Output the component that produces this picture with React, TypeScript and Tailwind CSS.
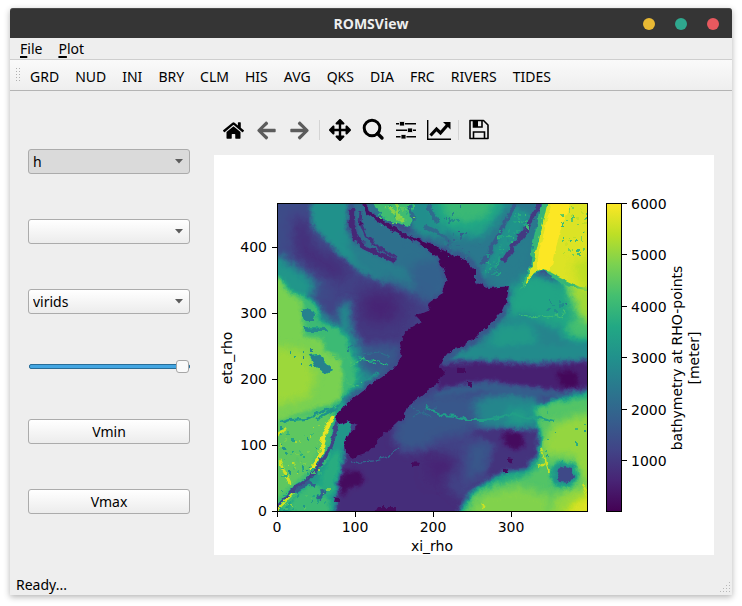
import { useState } from "react";
import type { ReactNode } from "react";
import { FaArrowLeft, FaArrowRight, FaArrowsAlt, FaHome } from "react-icons/fa";

const datasets = ["GRD", "NUD", "INI", "BRY", "CLM", "HIS", "AVG", "QKS", "DIA", "FRC", "RIVERS", "TIDES"];

/* One depth contour: v is a percentage of the 0-6000 m colour range. */
type Shape = { v: number; blur: 0 | 1 | 2 | 4 | 7; d: string; w?: number };

const shapes: Shape[] = [
  // north-west basin
  { v: 23, blur: 4, d: "M265 190H330V300H265Z" },
  { v: 13, blur: 7, d: "M292 215L308 218L314 245L342 262L350 275L335 282L312 268L295 258Z" },
  { v: 50, blur: 2, d: "M310 195L312 225L328 243L347 261L365 275L388 284L385 262L360 250L347 230L349 195Z" },
  { v: 42, blur: 4, d: "M345 235L370 250L397 258L430 262L436 285L428 300L405 293L382 280L358 268Z" },
  { v: 37, blur: 2, d: "M350 195L372 195L392 225L420 240L438 258L442 290L428 296L408 270L378 256L358 240Z" },
  { v: 31, blur: 4, d: "M410 265L438 258L447 278L443 292L430 302L415 296Z" },
  { v: 17, blur: 7, d: "M358 282L400 288L425 302L415 320L402 360L350 352L345 320Z" },
  { v: 10, blur: 7, d: "M368 292L396 295L400 318L372 324L360 310Z" },
  // western shelf
  { v: 52, blur: 4, d: "M265 258L280 256L300 270L318 285L308 298L340 330L339 308L350 300L351 330L362 350L390 362L372 390L340 415L345 450L333 525H265Z" },
  { v: 68, blur: 2, d: "M265 268L281 277L292 292L307 297L318 305L320 322L336 326L346 336L351 352L360 365L355 385L338 405L320 525H265Z" },
  { v: 80, blur: 2, d: "M265 275L280 279L288 292L302 301L303 320L305 337L322 338L325 352L340 358L343 375L342 398L330 405L300 414L265 428Z" },
  { v: 85, blur: 4, d: "M265 345L305 350L316 378L308 398L265 408Z" },
  { v: 75, blur: 2, d: "M265 425L300 415L332 410L325 440L308 472L265 510Z" },
  { v: 44, blur: 1, d: "M302 311L307 309L315 314L314 321L306 321L302 317Z" },
  { v: 47, blur: 1, d: "M303 327L325 328L328 332L307 332Z" },
  { v: 44, blur: 1, d: "M309 355L320 354L324 362L332 370L326 373L315 367Z" },
  { v: 28, blur: 4, d: "M364 345L402 345L395 367L374 378L358 365Z" },
  // western slope
  { v: 53, blur: 1, d: "M337 424L352 420L347 445L343 464L340 486L334 525L270 525L307 483L330 458Z" },
  { v: 68, blur: 2, d: "M283 525L293 497L313 482L328 490L333 525Z" },
  { v: 62, blur: 2, d: "M318 480L333 450L343 454L337 492L325 498Z" },
  { v: 20, blur: 1, w: 4, d: "M274 510L293 490L310 478L321 463L331 447L337 423L345 410" },
  { v: 30, blur: 1, w: 4, d: "M295 492L309 482L315 486M318 500L325 490" },
  { v: 97, blur: 0, w: 4, d: "M333 415L325 433L321 453L312 470" },
  { v: 93, blur: 1, w: 3, d: "M276 513L286 500L292 494M277 435L287 428M279 460L290 484" },
  { v: 50, blur: 1, w: 2, d: "M280 423L290 420L305 419L321 412L334 408M316 419L333 410L345 400" },
  { v: 57, blur: 1, w: 4, d: "M336 412L345 399L362 386L378 374" },
  // southern basin
  { v: 13, blur: 2, d: "M345 450L358 425L405 420L430 390L460 420L475 435L480 478L455 525H333L340 485Z" },
  { v: 27, blur: 4, d: "M400 416L412 402L432 392L470 393L540 395L540 427L475 431L465 446L402 452L392 435Z" },
  { v: 20, blur: 4, d: "M432 440L475 430L478 485L465 502L446 488Z" },
  { v: 27, blur: 4, d: "M467 447L492 437L486 472L467 481Z" },
  { v: 9, blur: 7, d: "M432 453L457 456L453 475L430 480Z" },
  { v: 46, blur: 4, d: "M473 403L490 395L518 392L538 398L548 432L508 429L480 427Z" },
  { v: 55, blur: 4, d: "M505 410L528 407L533 425L510 424Z" },
  { v: 15, blur: 2, d: "M468 431L500 429L541 431L538 450L525 467L506 474L486 478L496 445Z" },
  { v: 3, blur: 2, d: "M502 433L519 431L524 438L524 446L516 451L504 444Z" },
  // north-east plateau
  { v: 40, blur: 4, d: "M410 190H552L535 280L506 296L476 280L445 252L410 238Z" },
  { v: 49, blur: 2, d: "M402 195H448L450 228L440 238L415 232Z" },
  { v: 58, blur: 4, d: "M430 195H512L498 220L480 238L455 235L436 222Z" },
  { v: 67, blur: 4, d: "M438 190H500L488 217L465 224L446 218Z" },
  { v: 69, blur: 1, d: "M370 195L376 208L387 221L397 224L408 227L413 218L417 195Z" },
  { v: 82, blur: 1, w: 4, d: "M398 204L397 216L404 223M389 206L393 213" },
  { v: 35, blur: 1, w: 4, d: "M425 226L440 234L452 244M410 205L414 221M428 205L437 222" },
  { v: 42, blur: 4, d: "M486 275L508 255L529 232L533 245L522 288L504 295Z" },
  { v: 51, blur: 2, d: "M514 208L530 212L521 232L504 256L485 278L482 273Z" },
  { v: 29, blur: 1, w: 4, d: "M517 201L506 220L497 238L482 265" },
  { v: 17, blur: 1, w: 5, d: "M544 198L534 214L527 229L514 245L503 262" },
  // east
  { v: 45, blur: 4, d: "M505 292L525 270L600 320V366H440L475 338L498 316Z" },
  { v: 59, blur: 4, d: "M510 292L528 274L560 280L572 300L575 335L548 325L525 314L508 318Z" },
  { v: 54, blur: 4, d: "M498 325L530 322L540 345L485 352Z" },
  { v: 70, blur: 4, d: "M560 275L600 270V338L580 342L563 335L572 316Z" },
  { v: 86, blur: 4, d: "M560 272L612 262V324L584 322L574 302Z" },
  { v: 66, blur: 1, d: "M543 195H600V292L574 288L556 280L542 270L529 277L519 292L530 266L534 236Z" },
  { v: 95, blur: 1, d: "M549 195H600V283L580 287L559 277L543 268L534 273L524 287L536 253L543 222Z" },
  { v: 100, blur: 1, d: "M554 195H574L562 225L554 255L551 270L537 269L539 252L546 223Z" },
  { v: 90, blur: 4, d: "M572 262L600 252V292L580 290Z" },
  // eastern channel
  { v: 48, blur: 2, d: "M454 350L475 347L600 344V362L447 363Z" },
  { v: 30, blur: 2, d: "M438 361L480 360L530 363L600 358V392L555 397L515 395L480 391L436 397Z" },
  { v: 9, blur: 2, d: "M438 364L480 361L530 365L600 361V386L562 391L530 387L485 381L463 385L436 390Z" },
  { v: 2, blur: 2, d: "M557 372L574 371L580 384L568 389L560 382Z" },
  // south-east shelf
  { v: 62, blur: 2, d: "M530 408L555 399L600 388V525H450L470 493L490 480L506 472L525 470L540 455L544 440L540 428Z" },
  { v: 73, blur: 2, d: "M536 408L558 402L600 397V525H460L474 494L494 485L525 478L539 466L541 435Z" },
  { v: 84, blur: 4, d: "M553 423L600 410V525H545L554 495L585 485L572 456L546 457L541 445Z" },
  { v: 81, blur: 4, d: "M480 495L515 486L550 495V525H464Z" },
  { v: 95, blur: 4, d: "M583 497L600 488V525H560L569 507Z" },
  { v: 50, blur: 2, d: "M552 467L560 462L575 465L578 477L570 487L554 485L551 478Z" },
  { v: 22, blur: 1, d: "M558 469L564 466L572 468L574 476L569 483L560 482L557 476Z" },
  { v: 92, blur: 0, w: 2, d: "M541 448L545 459L549 472M582 484L588 495M537 467L545 464M480 503L485 507" },
  // abyssal trench
  { v: 25, blur: 2, w: 5, d: "M413 238L440 249L466 258L477 271L480 282M508 290L503 315L475 340L455 352L444 362M345 402L372 382L400 363" },
  { v: 1, blur: 1, d: "M407 235L425 241L445 251L466 260L475 270L475 282L488 288L509 286L507 298L501 312L488 326L475 338L462 347L453 348L444 359L439 368L444 371L438 383L424 393L409 405L404 417L380 438L367 453L353 458L345 453L344 444L350 432L358 425L348 421L340 424L335 417L347 403L367 387L382 377L394 367L402 356L400 343L408 330L421 322L415 316L427 311L430 302L443 293L447 278L438 258L425 247Z" },
  { v: 3, blur: 2, d: "M343 471L359 471L365 479L359 486L350 488L342 496L337 486Z" },
  { v: 3, blur: 1, d: "M335 497L340 498L340 502L334 502ZM412 462L420 463L418 467L412 466ZM457 368L465 367L465 373L458 373ZM468 383L473 383L472 387L468 386ZM503 470L508 469L507 473L503 473ZM508 457L514 458L512 463L508 461ZM378 507H396V514H374Z" },
  // banks and ridges beside the trench
  { v: 11, blur: 1, w: 5, d: "M352 209L351 223L355 236L364 247L379 254L395 261" },
  { v: 15, blur: 1, w: 3, d: "M361 211L360 222L366 236L378 248L396 257" },
  { v: 5, blur: 1, w: 4, d: "M365 203L368 212L376 218L388 226L402 234L413 240M359 222L361 225" },
  // fine channels
  { v: 56, blur: 1, w: 2, d: "M426 407L442 415L456 416L468 420L485 420L498 418L512 413L522 418L535 417L555 422" },
  { v: 70, blur: 1, w: 1, d: "M520 315L528 317L540 316L548 318L556 314L563 318L565 308M332 356L341 360L347 358L352 366L364 357L375 364M344 370L348 384L358 386L363 381M358 358L378 361L389 366" },
  { v: 38, blur: 1, w: 1, d: "M410 406L421 412L432 417M414 417L427 409L437 408M350 463L372 461L390 456L399 449M347 350L357 344L363 354L378 352L390 357" },
];

/* Scattered seamounts and pits, generated from a fixed seed per field. */
type Field = { x: number; y: number; w: number; h: number; n: number; v: number; spread: number };
const fields: Field[] = [
  { x: 279, y: 425, w: 40, h: 50, n: 75, v: 70, spread: 40 },
  { x: 279, y: 488, w: 48, h: 22, n: 30, v: 70, spread: 35 },
  { x: 560, y: 205, w: 26, h: 50, n: 42, v: 80, spread: 32 },
  { x: 546, y: 296, w: 20, h: 17, n: 12, v: 47, spread: 14 },
  { x: 513, y: 212, w: 14, h: 20, n: 30, v: 58, spread: 20 },
  { x: 498, y: 230, w: 14, h: 22, n: 28, v: 54, spread: 20 },
  { x: 485, y: 252, w: 14, h: 24, n: 28, v: 55, spread: 18 },
  { x: 436, y: 205, w: 38, h: 15, n: 9, v: 45, spread: 16 },
  { x: 440, y: 230, w: 40, h: 28, n: 24, v: 35, spread: 18 },
  { x: 284, y: 345, w: 28, h: 20, n: 9, v: 52, spread: 20 },
  { x: 378, y: 205, w: 36, h: 20, n: 26, v: 66, spread: 28 },
  { x: 545, y: 400, w: 40, h: 80, n: 10, v: 60, spread: 20 },
];

function gray(value: number) {
  const level = Math.round((Math.max(0, Math.min(100, value)) / 100) * 255);
  return `rgb(${level},${level},${level})`;
}

function speckles() {
  let seed = 41;
  const next = () => {
    seed = (seed * 16807) % 2147483647;
    return seed / 2147483647;
  };
  return fields.flatMap((f) =>
    Array.from({ length: f.n }, () => ({
      x: Math.round(f.x + next() * f.w),
      y: Math.round(f.y + next() * f.h),
      w: 1 + Math.round(next() * 2),
      h: 1 + Math.round(next() * 2),
      v: f.v + (next() - 0.5) * f.spread,
    })),
  );
}

const viridis = ["#440154", "#482475", "#414487", "#355f8d", "#2a788e", "#21918c", "#22a884", "#44bf70", "#7ad151", "#bddf26", "#fde725"];
const channel = (at: number) => viridis.map((c) => (parseInt(c.slice(at, at + 2), 16) / 255).toFixed(3)).join(" ");

function Bathymetry() {
  const region = {
    filterUnits: "userSpaceOnUse" as const,
    x: 257,
    y: 183,
    width: 350,
    height: 348,
    colorInterpolationFilters: "sRGB" as const,
  };
  return (
    <svg x={277} y={203} width={310} height={308} viewBox="277 203 310 308">
      <defs>
        {[1, 2, 4, 7].map((b) => (
          <filter key={b} id={`soft${b}`} {...region}>
            <feGaussianBlur stdDeviation={b === 1 ? 0.7 : b} />
          </filter>
        ))}
        <filter id="depth" {...region}>
          <feTurbulence type="fractalNoise" baseFrequency="0.14" numOctaves="3" seed="8" result="noise" />
          <feDisplacementMap in="SourceGraphic" in2="noise" scale="6" xChannelSelector="R" yChannelSelector="G" />
          <feGaussianBlur stdDeviation="0.45" />
          <feComponentTransfer>
            <feFuncR type="table" tableValues={channel(1)} />
            <feFuncG type="table" tableValues={channel(3)} />
            <feFuncB type="table" tableValues={channel(5)} />
          </feComponentTransfer>
        </filter>
      </defs>
      <g filter="url(#depth)">
        <rect x={257} y={183} width={350} height={348} fill={gray(20)} />
        {shapes.map((s, i) => (
          <path
            key={i}
            d={s.d}
            fill={s.w ? "none" : gray(s.v)}
            stroke={s.w ? gray(s.v) : "none"}
            strokeWidth={s.w}
            strokeLinejoin="round"
            filter={s.blur ? `url(#soft${s.blur})` : undefined}
          />
        ))}
        {speckles().map((p, i) => (
          <rect key={i} x={p.x} y={p.y} width={p.w} height={p.h} fill={gray(p.v)} />
        ))}
      </g>
    </svg>
  );
}

function Figure() {
  return (
    <svg viewBox="214 155 500 400" className="block w-full bg-white font-['DejaVu_Sans',sans-serif] text-[14px]" role="img" aria-label="Bathymetry map">
      <defs>
        <linearGradient id="colorbar" x1="0" y1="1" x2="0" y2="0">
          {viridis.map((c, i) => (
            <stop key={c} offset={i / 10} stopColor={c} />
          ))}
        </linearGradient>
      </defs>
      <Bathymetry />
      <rect x={277.5} y={203.5} width={310} height={308} fill="none" stroke="#000" />
      {[0, 100, 200, 300, 400].map((t, i) => (
        <g key={t}>
          <path d={`M272 ${511.5 - i * 66}h5`} stroke="#000" />
          <text x={267} y={516 - i * 66} textAnchor="end">{t}</text>
        </g>
      ))}
      {[0, 100, 200, 300].map((t, i) => (
        <g key={t}>
          <path d={`M${277.5 + i * 78} 512v5`} stroke="#000" />
          <text x={277 + i * 78} y={532} textAnchor="middle">{t}</text>
        </g>
      ))}
      <text x={432} y={551} textAnchor="middle">xi_rho</text>
      <text transform="translate(232 358) rotate(-90)" textAnchor="middle">eta_rho</text>
      <rect x={606.5} y={203.5} width={15} height={308} fill="url(#colorbar)" stroke="#000" />
      {[6000, 5000, 4000, 3000, 2000, 1000].map((t, i) => (
        <g key={t}>
          <path d={`M622 ${Math.round(203 + i * 51.4) + 0.5}h5`} stroke="#000" />
          <text x={631} y={Math.round(209 + i * 51.4)}>{t}</text>
        </g>
      ))}
      <text transform="translate(682 358) rotate(-90)" textAnchor="middle">bathymetry at RHO-points</text>
      <text transform="translate(699 358) rotate(-90)" textAnchor="middle">[meter]</text>
    </svg>
  );
}

function Combo({ label, options, pressed }: { label: string; options: string[]; pressed?: boolean }) {
  return (
    <label className="relative block">
      <select
        aria-label={label}
        className={`block h-[25px] w-full appearance-none rounded-[3px] border border-[#ababab] pr-6 pl-1 leading-none ${pressed ? "bg-[#dadada]" : "bg-linear-to-b from-white to-[#ececec]"}`}
      >
        {options.map((o) => (
          <option key={o}>{o}</option>
        ))}
      </select>
      <svg viewBox="0 0 8 5" className="pointer-events-none absolute top-[10px] right-[7px] h-[5px] w-2">
        <path d="M0 0H8L4 4.5Z" fill="#5c5c5c" />
      </svg>
    </label>
  );
}

function PushButton({ children }: { children: ReactNode }) {
  return (
    <button className="flex h-[25px] w-full items-center justify-center rounded-[3px] border border-[#ababab] bg-linear-to-b from-white to-[#ececec]">
      {children}
    </button>
  );
}

function Tool({ label, children }: { label: string; children: ReactNode }) {
  return (
    <button aria-label={label} className="flex h-8 w-[33px] items-center justify-center">
      {children}
    </button>
  );
}

function Separator() {
  return <span className="mx-[3px] h-5 w-px bg-[#d4d4d4]" />;
}

function PlotToolbar() {
  return (
    <div className="flex h-[50px] items-center pl-[3px]">
      <Tool label="Home"><FaHome size={21} /></Tool>
      <Tool label="Back"><FaArrowLeft size={21} color="#5c5c5c" /></Tool>
      <Tool label="Forward"><FaArrowRight size={21} color="#5c5c5c" /></Tool>
      <Separator />
      <Tool label="Pan"><FaArrowsAlt size={22} /></Tool>
      <Tool label="Zoom">
        <svg width="24" height="24" viewBox="0 0 24 24" fill="none" stroke="#000">
          <circle cx="11" cy="10" r="7.8" strokeWidth="3" />
          <path d="M16.5 15.500L21 20" strokeWidth="3.4" strokeLinecap="round" />
        </svg>
      </Tool>
      <Tool label="Configure subplots">
        <svg width="24" height="24" viewBox="0 0 24 24" fill="#000">
          <path d="M2 5h20v1.500H2zM2 11.500h20v1.500H2zM2 18h20v1.500H2z" />
          <path d="M5.500 3.500h5v4.500h-5zM13.500 10h5v4.500h-5zM7 16.500h5v4.500H7z" stroke="#eee" strokeWidth="0.8" />
        </svg>
      </Tool>
      <Tool label="Edit axis">
        <svg width="24" height="24" viewBox="0 0 24 24" fill="none" stroke="#000">
          <path d="M.7 2V21.300H24" strokeWidth="1.4" />
          <path d="M3.500 17.500L9.500 11L13.500 15L20.500 7" strokeWidth="3.2" />
          <path d="M16 4H23.500V11.500Z" fill="#000" stroke="none" />
        </svg>
      </Tool>
      <Separator />
      <Tool label="Save">
        <svg width="24" height="24" viewBox="0 0 24 24" fill="none" stroke="#000" strokeWidth="1.6">
          <path d="M3 2.500H16.500L21 7V20.500H3Z" strokeLinejoin="round" />
          <path d="M6.500 20.500V14H17.500V20.500M6.500 2.500V9H15V2.500" />
          <path d="M6.500 2.500H11V9H6.500Z" fill="#000" stroke="none" />
        </svg>
      </Tool>
    </div>
  );
}

export default function App() {
  const [level, setLevel] = useState(100);
  return (
    <div className="min-h-screen bg-white px-[10px] pt-2 pb-[11px] font-['Noto_Sans','Open_Sans',sans-serif] text-[14px] leading-5 text-black">
      <div className="rounded-t-[3px] bg-[#eeeeee] shadow-[0_2px_6px_rgba(0,0,0,0.3)]">
        <header className="grid h-[30px] grid-cols-[1fr_auto_1fr] items-center rounded-t-[3px] border-t border-[#4c4c4c] bg-[#353535]">
          <span />
          <h1 className="font-['Open_Sans',sans-serif] text-[14px] font-bold text-[#eeeeee]">ROMSView</h1>
          <div className="flex justify-end gap-5 pr-[13px]">
            <button aria-label="Minimize" className="h-3 w-3 rounded-full bg-[#e9b934]" />
            <button aria-label="Maximize" className="h-3 w-3 rounded-full bg-[#2fa88e]" />
            <button aria-label="Close" className="h-3 w-3 rounded-full bg-[#e7595f]" />
          </div>
        </header>

        <nav className="flex h-[22px] items-center gap-4 border-b border-[#cecece] px-[10px]">
          {["File", "Plot"].map((item) => (
            <button key={item}>
              <span className="underline decoration-2 underline-offset-2">{item[0]}</span>
              {item.slice(1)}
            </button>
          ))}
        </nav>

        <div className="flex h-[31px] items-center border-b border-[#b4b4b4] bg-linear-to-b from-[#fafafa] to-[#eeeeee] pl-[5px]">
          <span className="mr-[10px] h-4 w-[5px] bg-[radial-gradient(#b0b0b0_25%,transparent_30%)] bg-size-[3px_3px]" />
          <div className="flex gap-4 pt-[3px]">
            {datasets.map((name) => (
              <button key={name}>{name}</button>
            ))}
          </div>
        </div>

        <main className="flex gap-6 px-[18px] pt-[14px]">
          <aside className="flex w-[162px] shrink-0 flex-col gap-[45px] pt-11">
            <Combo label="Variable" options={["h"]} pressed />
            <Combo label="Level" options={[""]} />
            <Combo label="Colour map" options={["virids"]} />
            <input
              type="range"
              aria-label="Colour range"
              value={level}
              onChange={(e) => setLevel(Number(e.target.value))}
              className="h-[15px] w-full appearance-none bg-transparent pl-px [&::-webkit-slider-runnable-track]:h-[5px] [&::-webkit-slider-runnable-track]:rounded-[2px] [&::-webkit-slider-runnable-track]:border [&::-webkit-slider-runnable-track]:border-[#286d98] [&::-webkit-slider-runnable-track]:bg-[#43a6e2] [&::-webkit-slider-thumb]:mt-[-5px] [&::-webkit-slider-thumb]:h-[13px] [&::-webkit-slider-thumb]:w-[13px] [&::-webkit-slider-thumb]:appearance-none [&::-webkit-slider-thumb]:rounded-[3px] [&::-webkit-slider-thumb]:border [&::-webkit-slider-thumb]:border-[#a6a6a6] [&::-webkit-slider-thumb]:bg-[#fafafa]"
            />
            <PushButton>Vmin</PushButton>
            <PushButton>Vmax</PushButton>
          </aside>
          <section className="min-w-0 flex-1">
            <PlotToolbar />
            <Figure />
          </section>
        </main>

        <footer className="flex h-10 items-end justify-between pl-[6px]">
          <span>Ready...</span>
          <svg width="12" height="12" viewBox="0 0 12 12" fill="#b8b8b8" className="mr-[1px] mb-[1px]">
            <path d="M10 0h1v1h-1zM10 3h1v1h-1zM10 6h1v1h-1zM10 9h1v1h-1zM7 3h1v1H7zM7 6h1v1H7zM7 9h1v1H7zM4 6h1v1H4zM4 9h1v1H4zM1 9h1v1H1z" />
          </svg>
        </footer>
      </div>
    </div>
  );
}
